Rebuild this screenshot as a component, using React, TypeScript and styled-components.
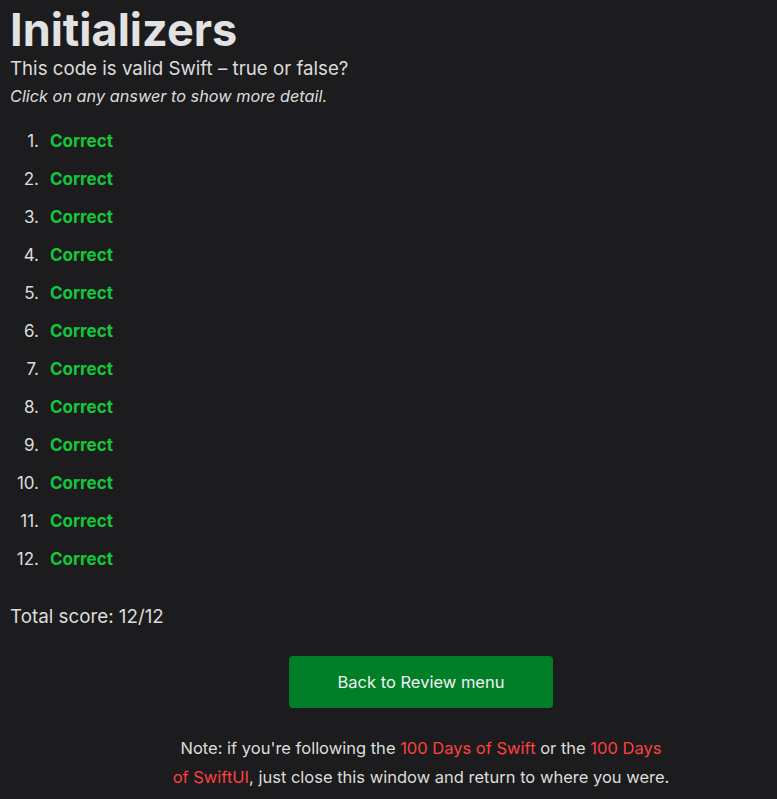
import styled, { createGlobalStyle } from "styled-components";

const GlobalStyle = createGlobalStyle`
  body {
    margin: 0;
    background: #1c1c1e;
    color: #dcdcdc;
    font-family: Inter, "Noto Sans", sans-serif;
  }
`;

const answers = Array.from({ length: 12 }, () => "Correct");

const App = () => {
  return (
    <>
      <GlobalStyle />
      <Page>
        <Title>Initializers</Title>
        <Subtitle>This code is valid Swift – true or false?</Subtitle>
        <Hint>Click on any answer to show more detail.</Hint>
        <AnswerList>
          {answers.map((a, i) => (
            <Answer key={i}>
              <Num>{i + 1}.</Num>
              <Result>{a}</Result>
            </Answer>
          ))}
        </AnswerList>
        <Score>Total score: 12/12</Score>
        <Footer>
          <BackButton>Back to Review menu</BackButton>
          <Note>
            Note: if you're following the <Link>100 Days of Swift</Link> or the{" "}
            <Link>100 Days of SwiftUI</Link>, just close this window and return
            to where you were.
          </Note>
        </Footer>
      </Page>
    </>
  );
};

export default App;

const Page = styled.main`
  padding: 0 10px;
`;

const Title = styled.h1`
  margin: 0;
  padding-top: 4px;
  font-size: 45px;
  line-height: 52px;
  font-weight: 700;
  color: #e2e2e2;
`;

const Subtitle = styled.p`
  margin: 0;
  font-size: 18.7px;
  line-height: 26px;
`;

const Hint = styled.p`
  margin: 0;
  font-size: 16.3px;
  line-height: 28px;
  font-style: italic;
`;

const AnswerList = styled.ol`
  margin: 12px 0 0;
  padding: 0;
  list-style: none;
`;

const Answer = styled.li`
  display: flex;
  align-items: baseline;
  gap: 11px;
  height: 38px;
  line-height: 38px;
`;

const Num = styled.span`
  width: 29px;
  text-align: right;
  font-size: 17px;
  color: #dcdcdc;
`;

const Result = styled.span`
  color: #14c83a;
  font-size: 17px;
  font-weight: 700;
`;

const Score = styled.p`
  margin: 27px 0 0;
  font-size: 18.8px;
  line-height: 24px;
`;

const Footer = styled.div`
  display: flex;
  flex-direction: column;
  align-items: center;
  padding-left: 65px;
  margin-top: 27px;
`;

const BackButton = styled.button`
  width: 264px;
  height: 52px;
  border: none;
  border-radius: 4px;
  background: #007f28;
  color: #f2f2f2;
  font-family: inherit;
  font-size: 16.5px;
  cursor: pointer;
`;

const Note = styled.p`
  margin: 26px 0 0;
  max-width: 499px;
  text-align: center;
  font-size: 16.5px;
  line-height: 29px;
`;

const Link = styled.span`
  color: #ff4040;
`;
